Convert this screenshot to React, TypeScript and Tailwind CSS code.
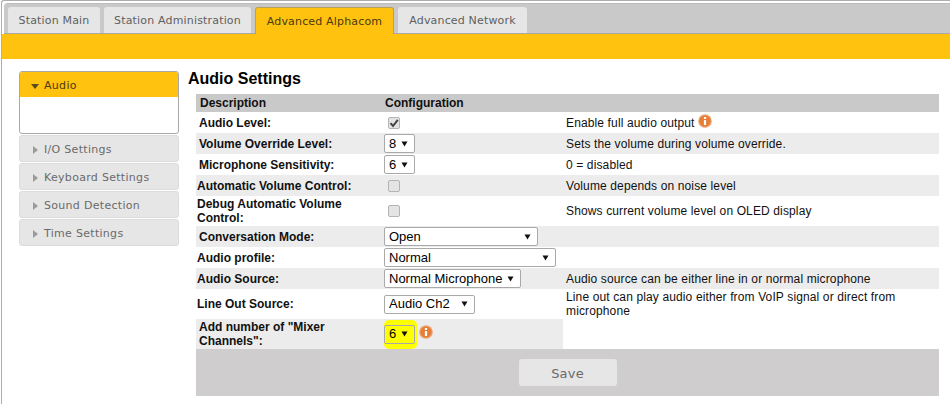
import React from 'react';

const SANS = 'font-["Liberation_Sans",Arial,sans-serif]';
const UI = 'font-["DejaVu_Sans",Verdana,sans-serif]';

const InfoIcon = () => (
  <svg width="14" height="14" viewBox="0 0 14 14" className="shrink-0">
    <circle cx="7" cy="7" r="6.8" fill="#eba271" />
    <circle cx="7" cy="7" r="5.6" fill="#e67f35" />
    <rect x="5.9" y="3" width="2.2" height="2" fill="#fff" />
    <rect x="5.9" y="6" width="2.2" height="5" fill="#fff" />
  </svg>
);

const Check = ({ checked }: { checked?: boolean }) => (
  <span className="flex h-[12px] w-[12px] items-center justify-center rounded-[2px] border border-[#b4b4b4] bg-[#e4e4e4]">
    {checked && (
      <svg width="10" height="10" viewBox="0 0 10 10">
        <path d="M1.5 5.2 L4 8 L8.8 1.8" fill="none" stroke="#444" strokeWidth="2" />
      </svg>
    )}
  </span>
);

const Select = ({ value, width, highlight }: { value: string; width: string; highlight?: boolean }) => (
  <span
    className={`flex h-[19px] items-center justify-between rounded-[2px] border border-[#a9a9a9] pl-[4px] pr-[6px] text-[13px] whitespace-nowrap text-black ${width} ${highlight ? 'bg-[#ffff00]' : 'bg-white'}`}
  >
    <span>{value}</span>
    <svg width="7" height="6" viewBox="0 0 7 6">
      <path d="M0.5 0.5 H6.5 L3.5 5.5 Z" fill="#111" />
    </svg>
  </span>
);

type Row = {
  label: string;
  control: React.ReactNode;
  note?: React.ReactNode;
  height: string;
  shaded?: boolean;
  indent?: boolean;
};

const rows: Row[] = [
  {
    label: 'Audio Level:',
    control: <span className="flex pl-[4px]"><Check checked /></span>,
    note: (
      <span className="flex items-center gap-[3px]">
        Enable full audio output
        <span className="-mt-[3px]"><InfoIcon /></span>
      </span>
    ),
    height: 'h-[21px]',
    indent: true,
  },
  { label: 'Volume Override Level:', control: <Select value="8" width="w-[31px]" />, note: 'Sets the volume during volume override.', height: 'h-[21px]', shaded: true, indent: true },
  { label: 'Microphone Sensitivity:', control: <Select value="6" width="w-[31px]" />, note: '0 = disabled', height: 'h-[21px]', indent: true },
  { label: 'Automatic Volume Control:', control: <span className="flex pl-[4px]"><Check /></span>, note: 'Volume depends on noise level', height: 'h-[21px]', shaded: true },
  { label: 'Debug Automatic Volume Control:', control: <span className="flex pl-[4px]"><Check /></span>, note: 'Shows current volume level on OLED display', height: 'h-[30px]' },
  { label: 'Conversation Mode:', control: <Select value="Open" width="w-[154px]" />, height: 'h-[21px]', shaded: true, indent: true },
  { label: 'Audio profile:', control: <Select value="Normal" width="w-[172px]" />, height: 'h-[21px]' },
  { label: 'Audio Source:', control: <Select value="Normal Microphone" width="w-[137px]" />, note: 'Audio source can be either line in or normal microphone', height: 'h-[21px]', shaded: true },
  { label: 'Line Out Source:', control: <Select value="Audio Ch2" width="w-[91px]" />, note: 'Line out can play audio either from VoIP signal or direct from microphone', height: 'h-[30px]' },
];

const tabs = [
  { name: 'Station Main', width: 'w-[92px]' },
  { name: 'Station Administration', width: 'w-[147px]' },
  { name: 'Advanced Alphacom', width: 'w-[139px]' },
  { name: 'Advanced Network', width: 'w-[129px]' },
];
const menu = ['I/O Settings', 'Keyboard Settings', 'Sound Detection', 'Time Settings'];

export default function App() {
  return (
    <div className={`h-[404px] w-[950px] overflow-hidden bg-white pl-[1px] ${SANS}`}>
      <div className="h-full rounded-tl-[3px] border-l border-t border-[#adadad] pt-[2px]">
        <div className="ml-[2px] flex h-[31px] items-end gap-[4px] rounded-tl-[4px] border-y border-t-[#bdbdbd] border-b-[#a9a9a9] bg-[#c9c9c9] pl-[4px]">
          {tabs.map((tab) => (
            <div
              key={tab.name}
              className={`flex items-center justify-center rounded-t-[3px] pt-[3px] text-[11px] tracking-[0.17px] ${tab.width} ${UI} ${
                tab.name === 'Advanced Alphacom'
                  ? '-mb-[1px] h-[27px] border border-b-0 border-[#b9a05a] bg-[#ffc20e] text-[#4a3a10]'
                  : 'h-[26px] bg-[#e6e6e6] text-[#5f5f5f]'
              }`}
            >
              {tab.name}
            </div>
          ))}
        </div>
        <div className="h-[25px] bg-[#ffc20e]" />
        <div className="flex pl-[17px] pt-[8px]">
          <div className={`mt-[4px] w-[160px] shrink-0 text-[11px] tracking-[0.3px] ${UI}`}>
            <div className="h-[63px] overflow-hidden rounded-[3px] border border-[#a8a8a8] bg-white">
              <div className="flex h-[25px] items-center gap-[5px] bg-[#ffc20e] pl-[11px] pt-[3px] text-[#4a3a10]">
                <svg width="8" height="5" viewBox="0 0 8 5">
                  <path d="M0 0 H8 L4 5 Z" fill="#5a4a1a" />
                </svg>
                Audio
              </div>
            </div>
            <div className="mt-[1px] flex flex-col gap-[1px]">
              {menu.map((item) => (
                <div
                  key={item}
                  className="flex h-[27px] items-center gap-[6px] rounded-[3px] border border-[#dcdcdc] bg-[#e6e6e6] pl-[13px] pt-[3px] text-[#6a6a6a]"
                >
                  <svg width="5" height="8" viewBox="0 0 5 8">
                    <path d="M0 0 V8 L5 4 Z" fill="#9a9a9a" />
                  </svg>
                  {item}
                </div>
              ))}
            </div>
          </div>
          <div className="ml-[9px] min-w-0 flex-1">
            <h1 className="h-[27px] text-[16px] font-bold leading-[24px] text-black">Audio Settings</h1>
            <div className="ml-[8px] w-[743px] text-[12px] text-[#111]">
              <div className="flex h-[18px] items-center bg-[#c9c9c9] font-bold">
                <span className="w-[189px] pl-[4px]">Description</span>
                <span>Configuration</span>
              </div>
              {rows.map((row) => (
                <div key={row.label} className={`flex items-center ${row.height} ${row.shaded ? 'bg-[#ececec]' : 'bg-white'}`}>
                  <div className={`w-[188px] shrink-0 pr-[20px] font-bold leading-[14px] ${row.indent ? 'pl-[3px]' : 'pl-[1px]'}`}>{row.label}</div>
                  <div className="w-[182px] shrink-0">{row.control}</div>
                  <div className="min-w-0 flex-1 pr-[8px] leading-[14px] tracking-[0.13px]">{row.note}</div>
                </div>
              ))}
              <div className="flex h-[30px]">
                <div className="flex w-[367px] items-center bg-[#ececec]">
                  <div className="w-[188px] shrink-0 pl-[3px] pr-[20px] font-bold leading-[14px]">Add number of "Mixer Channels":</div>
                  <div className="flex items-center gap-[2px]">
                    <div className="-my-[2px] rounded-[5px] bg-[#ffff00] py-[5px] pr-[2px]">
                      <Select value="6" width="w-[31px]" highlight />
                    </div>
                    <span className="-mt-[5px]"><InfoIcon /></span>
                  </div>
                </div>
              </div>
              <div className="flex h-[47px] items-center justify-center bg-[#cfcdce]">
                <div className={`flex h-[27px] w-[98px] items-center justify-center rounded-[3px] bg-[#e6e6e6] pt-[3px] text-[13px] tracking-[0.2px] text-[#6a6a6a] ${UI}`}>
                  Save
                </div>
              </div>
            </div>
          </div>
        </div>
      </div>
    </div>
  );
}
